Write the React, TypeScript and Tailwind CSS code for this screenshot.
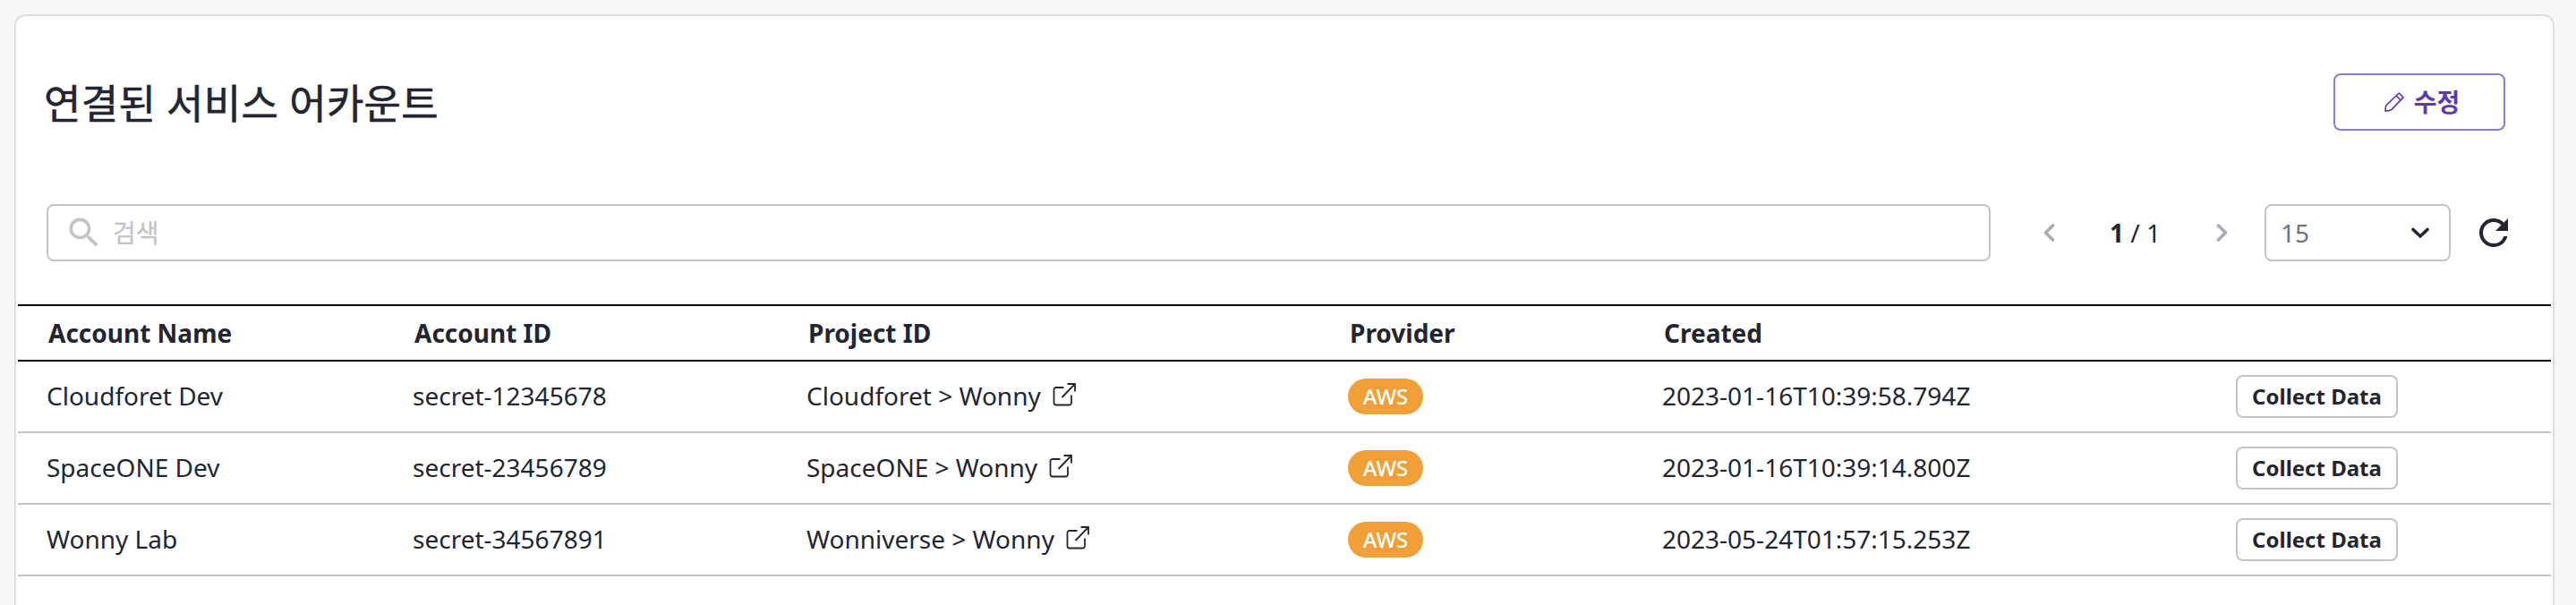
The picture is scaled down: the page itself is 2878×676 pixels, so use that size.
import React from "react";

const accounts = [
  { name: "Cloudforet Dev", id: "secret-12345678", project: "Cloudforet > Wonny", provider: "AWS", created: "2023-01-16T10:39:58.794Z" },
  { name: "SpaceONE Dev", id: "secret-23456789", project: "SpaceONE > Wonny", provider: "AWS", created: "2023-01-16T10:39:14.800Z" },
  { name: "Wonny Lab", id: "secret-34567891", project: "Wonniverse > Wonny", provider: "AWS", created: "2023-05-24T01:57:15.253Z" },
];

const columns = "grid grid-cols-[409px_440px_605px_351px_641px_1fr] items-center";

function SearchIcon() {
  return (
    <svg className="size-[44px] shrink-0" viewBox="0 0 24 24" fill="#c3c3c9">
      <path d="M15.5 14h-.79l-.28-.27A6.471 6.471 0 0 0 16 9.5 6.5 6.5 0 1 0 9.5 16c1.61 0 3.09-.59 4.23-1.57l.27.28v.79l5 4.99L20.49 19l-4.99-5zm-6 0C7.01 14 5 11.99 5 9.5S7.01 5 9.5 5 14 7.01 14 9.5 11.99 14 9.5 14z" />
    </svg>
  );
}

function Chevron({ d, className }: { d: string; className: string }) {
  return (
    <svg className={className} viewBox="0 0 24 24" fill="none" stroke="currentColor" strokeWidth="3.6" strokeLinecap="round" strokeLinejoin="round">
      <path d={d} />
    </svg>
  );
}

function RefreshIcon() {
  return (
    <svg className="size-8 shrink-0" viewBox="4 4 16 16" fill="#232533">
      <path d="M17.65 6.35A7.958 7.958 0 0 0 12 4a8 8 0 1 0 7.73 10h-2.08A5.99 5.99 0 0 1 12 18a6 6 0 1 1 0-12c1.66 0 3.14.69 4.22 1.78L13 11h7V4l-2.35 2.35z" />
    </svg>
  );
}

function PencilIcon() {
  return (
    <svg className="size-[22px] shrink-0" viewBox="0 0 22 22" fill="none" stroke="#6038b3" strokeWidth="1.7" strokeLinejoin="round">
      <path d="M16.2 1 21 5.8 7.5 19.8C5 21 3 21 1 21c0-2 0-4 1-6.5Z" />
      <path d="M13.2 4 18 8.8" />
    </svg>
  );
}

function ExternalIcon() {
  return (
    <svg className="mb-0.5 size-[26px] shrink-0" viewBox="0 0 26 26" fill="none" stroke="#232533" strokeWidth="1.8">
      <path d="M12.5 5H4a2.5 2.5 0 0 0-2.5 2.5v14.5A2.5 2.5 0 0 0 4 24.5h14.5A2.5 2.5 0 0 0 21 22v-8.5" />
      <path d="M10.5 16 24.5 1.5M16.5 1H25v8.5" />
    </svg>
  );
}

export default function App() {
  return (
    <div className="h-[676px] overflow-hidden bg-[#f7f7f7] px-4 pt-4 font-['Noto_Sans','Noto_Sans_CJK_KR',sans-serif] text-[28px] leading-10 text-[#232533]">
      <main className="mr-2 h-[700px] rounded-xl border-2 border-[#dddddd] bg-white px-0.5">
        <header className="flex h-[210px] items-start justify-between pt-16 pr-[51px] pl-[29px]">
          <h1 className="pt-px text-[45px] leading-[66px] tracking-[0.3px] [-webkit-text-stroke:0.6px_#232533]">연결된 서비스 어카운트</h1>
          <button className="flex h-16 w-48 items-center justify-center gap-[11px] rounded-lg border-2 border-[#8b7bd3] pl-[6px] font-bold text-[#6038b3]">
            <PencilIcon />
            <span>수정</span>
          </button>
        </header>
        <div className="flex h-28 items-start pl-8">
          <div className="flex h-16 w-[2172px] items-center gap-[10px] rounded-lg border-2 border-[#c3c3c9] pl-[18px]">
            <SearchIcon />
            <span className="text-[#c3c3c9] [-webkit-text-stroke:0.3px_#c3c3c9]">검색</span>
          </div>
          <div className="flex h-16 w-[306px] items-center">
            <Chevron className="ml-[53px] size-6 text-[#a9abb4]" d="M16.5 4 8.5 12l8 8" />
            <div className="ml-[56px] w-[60px] whitespace-nowrap">
              <b>1</b> / 1
            </div>
            <Chevron className="ml-[54px] size-6 text-[#a9abb4]" d="M7.5 4l8 8-8 8" />
          </div>
          <div className="flex h-16 w-52 items-center justify-between rounded-lg border-2 border-[#c3c3c9] pr-5 pl-4 text-[#6e7180]">
            <span>15</span>
            <Chevron className="size-6 text-[#232533]" d="M4 8.5 12 16 20 8.5" />
          </div>
          <div className="ml-8 flex h-16 items-center">
            <RefreshIcon />
          </div>
        </div>
        <section>
          <div className={`${columns} h-16 border-y-2 border-black font-bold`}>
            {["Account Name", "Account ID", "Project ID", "Provider", "Created", ""].map((label) => (
              <span key={label} className="pl-[34px]">{label}</span>
            ))}
          </div>
          {accounts.map((a) => (
            <div key={a.id} className={`${columns} h-20 border-b-2 border-[#c3c3c9]`}>
              <span className="pb-0.5 pl-8">{a.name}</span>
              <span className="pb-0.5 pl-8">{a.id}</span>
              <span className="flex items-center gap-[13px] pb-0.5 pl-8">
                {a.project}
                <ExternalIcon />
              </span>
              <span className="pl-8">
                <span className="flex h-10 w-[84px] items-center justify-center rounded-full bg-[#f19f38] text-2xl font-medium text-white">{a.provider}</span>
              </span>
              <span className="pb-0.5 pl-8">{a.created}</span>
              <span className="pl-8">
                <button className="flex h-12 w-[181px] items-center justify-center rounded-lg border-2 border-[#c3c3c9] text-2xl font-bold">Collect Data</button>
              </span>
            </div>
          ))}
        </section>
      </main>
    </div>
  );
}
